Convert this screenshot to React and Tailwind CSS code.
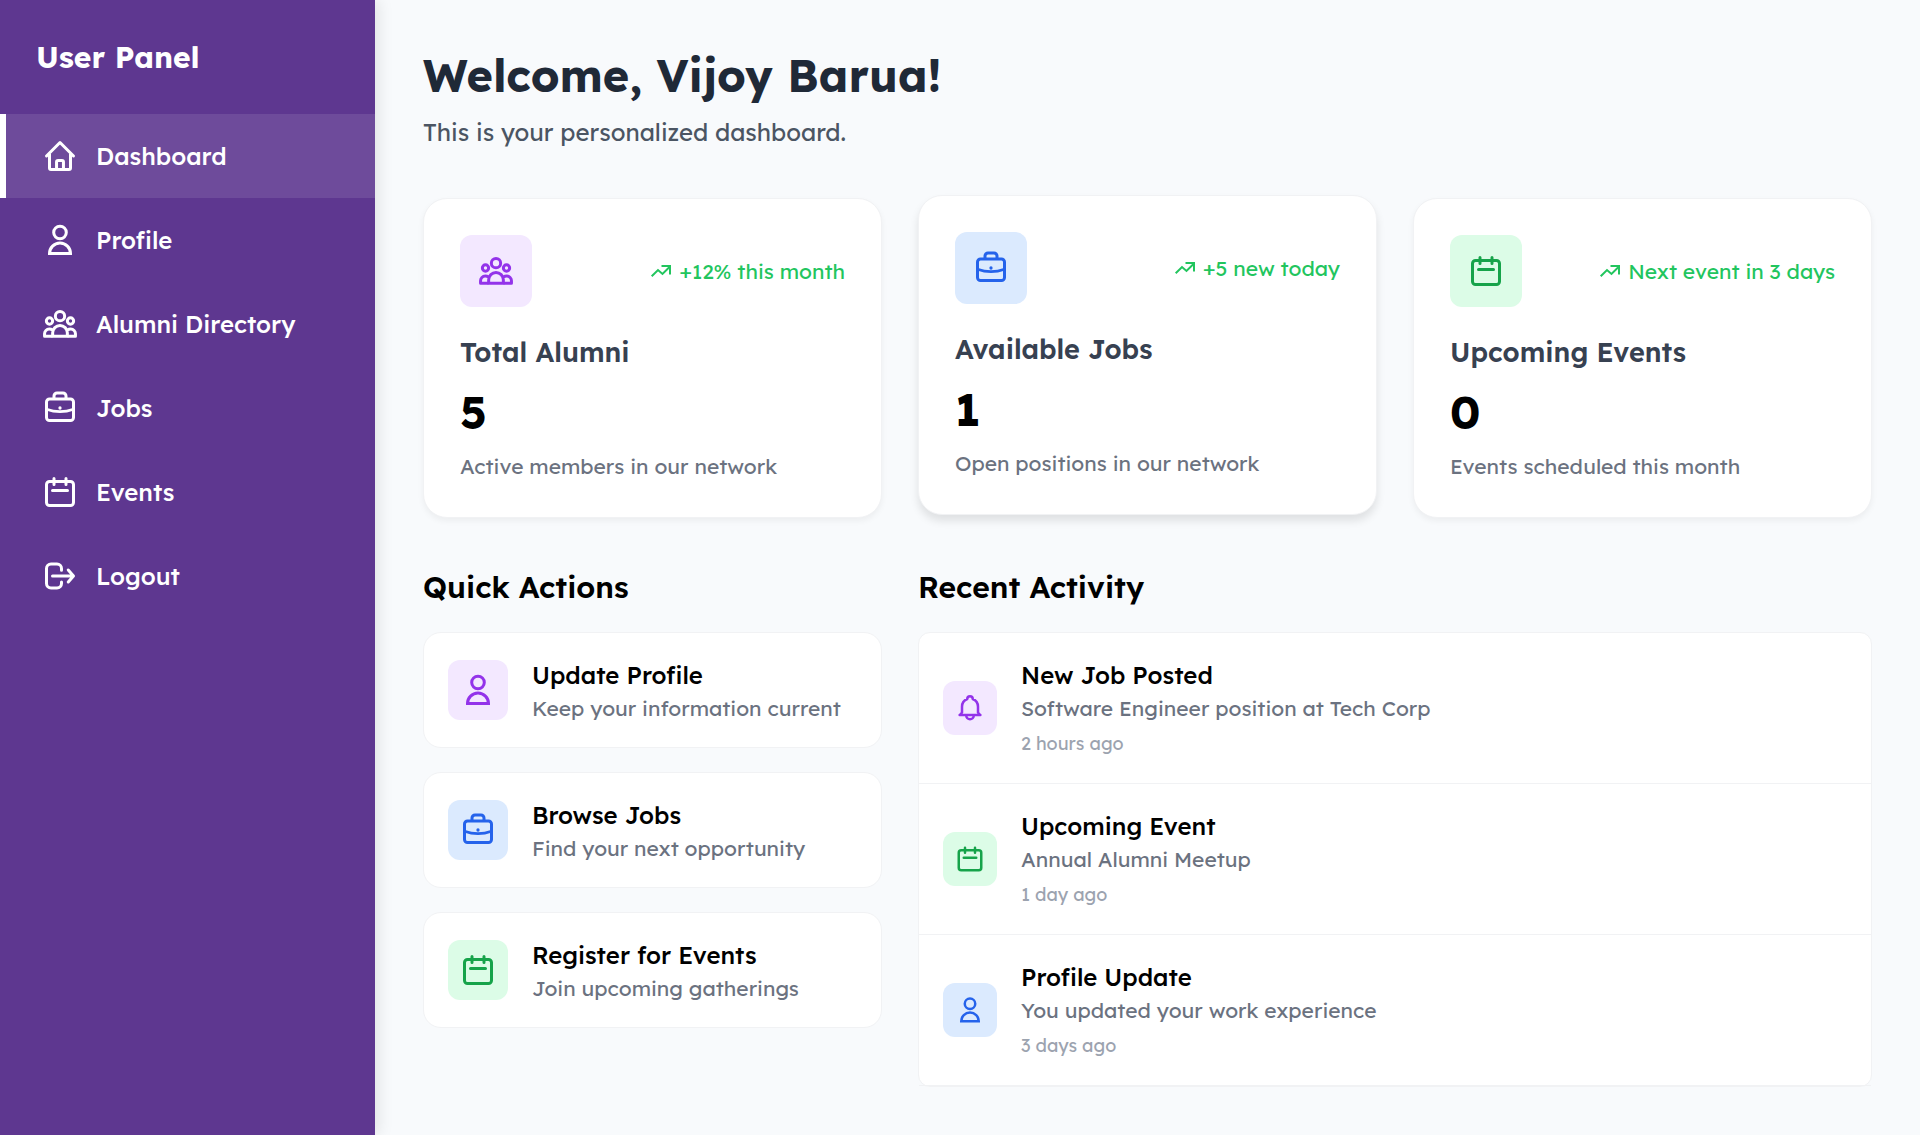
const Icon = ({ className = "size-9", children }) => (
  <svg
    viewBox="0 0 24 24"
    fill="none"
    stroke="currentColor"
    strokeWidth="2"
    aria-hidden="true"
    className={`shrink-0 ${className}`}
  >
    {children}
  </svg>
);

const HomeIcon = (props) => (
  <Icon {...props}>
    <path d="M3 12l9-9 9 9" strokeLinecap="round" strokeLinejoin="round" />
    <path d="M5 10.5V20a1 1 0 0 0 1 1h12a1 1 0 0 0 1-1v-9.5" />
    <path d="M9.7 21v-5a1 1 0 0 1 1-1h2.6a1 1 0 0 1 1 1v5" />
  </Icon>
);

const UserIcon = (props) => (
  <Icon {...props}>
    <circle cx="12" cy="7" r="4.2" />
    <path d="M5 21a7 7 0 0 1 14 0z" />
  </Icon>
);

const UsersIcon = (props) => (
  <Icon {...props}>
    <circle cx="12" cy="6.8" r="3.1" />
    <circle cx="5" cy="10" r="2.1" />
    <circle cx="19" cy="10" r="2.1" />
    <path d="M7.1 20.2v-2.3a4.9 4.9 0 0 1 9.8 0v2.3z" strokeLinejoin="round" />
    <path d="M7 20.2H1.7v-1.7a3.1 3.1 0 0 1 3.1-3.1c.9 0 1.6.2 2.2.6" strokeLinejoin="round" />
    <path d="M17 20.2h5.3v-1.7a3.1 3.1 0 0 0-3.1-3.1c-.9 0-1.600.2-2.2.6" strokeLinejoin="round" />
  </Icon>
);

const BriefcaseIcon = (props) => (
  <Icon {...props}>
    <rect x="3" y="6" width="18" height="14.3" rx="2" />
    <path d="M8 6V4a2 2 0 0 1 2-2h4a2 2 0 0 1 2 2v2" />
    <path d="M3 12.8c5.5 2 12.500 2 18 0" strokeWidth="1.8" />
    <circle cx="12" cy="12" r="1.1" fill="currentColor" stroke="none" />
  </Icon>
);

const CalendarIcon = (props) => (
  <Icon {...props}>
    <rect x="3" y="5" width="18" height="16" rx="2" />
    <path d="M8 3v4M16 3v4M7 11h10" strokeLinecap="round" />
  </Icon>
);

const LogoutIcon = (props) => (
  <Icon {...props}>
    <path
      d="M13 8.200V7A3 3 0 0 0 10 4H6A3 3 0 0 0 3 7v10a3 3 0 0 0 3 3h4a3 3 0 0 0 3-3v-1"
      strokeLinecap="round"
    />
    <path d="M7 12h14M17.500 8l3.500 4-3.500 4" strokeLinecap="round" strokeLinejoin="round" />
  </Icon>
);

const BellIcon = (props) => (
  <Icon {...props}>
    <path
      d="M3.700 17.500h16.600M4.300 17l1.300-1.400V11c0-2.800 1.700-5.200 4.200-6.200 0-1.300.9-2.200 2.200-2.200s2.200.9 2.200 2.200c2.500 1 4.200 3.400 4.200 6.200v4.600l1.300 1.400"
      strokeLinecap="round"
      strokeLinejoin="round"
    />
    <path d="M9 18a3 3 0 0 0 6 0" />
  </Icon>
);

const TrendIcon = (props) => (
  <Icon {...props}>
    <path d="M2.700 17.300L9 11l4.500 4 7.500-7.500" />
    <path d="M12.500 7H21v8.500" />
  </Icon>
);

const tones = {
  purple: "bg-[#f3e8ff] text-[#9333ea]",
  blue: "bg-[#dbeafe] text-[#2563eb]",
  green: "bg-[#dcfce7] text-[#16a34a]",
};

const navItems = [
  { label: "Dashboard", icon: HomeIcon, active: true },
  { label: "Profile", icon: UserIcon },
  { label: "Alumni Directory", icon: UsersIcon },
  { label: "Jobs", icon: BriefcaseIcon },
  { label: "Events", icon: CalendarIcon },
  { label: "Logout", icon: LogoutIcon },
];

const stats = [
  { title: "Total Alumni", value: "5", note: "Active members in our network", trend: "+12% this month", icon: UsersIcon, tone: "purple" },
  { title: "Available Jobs", value: "1", note: "Open positions in our network", trend: "+5 new today", icon: BriefcaseIcon, tone: "blue", raised: true },
  { title: "Upcoming Events", value: "0", note: "Events scheduled this month", trend: "Next event in 3 days", icon: CalendarIcon, tone: "green" },
];

const actions = [
  { title: "Update Profile", note: "Keep your information current", icon: UserIcon, tone: "purple" },
  { title: "Browse Jobs", note: "Find your next opportunity", icon: BriefcaseIcon, tone: "blue" },
  { title: "Register for Events", note: "Join upcoming gatherings", icon: CalendarIcon, tone: "green" },
];

const activity = [
  { title: "New Job Posted", note: "Software Engineer position at Tech Corp", time: "2 hours ago", icon: BellIcon, tone: "purple" },
  { title: "Upcoming Event", note: "Annual Alumni Meetup", time: "1 day ago", icon: CalendarIcon, tone: "green" },
  { title: "Profile Update", note: "You updated your work experience", time: "3 days ago", icon: UserIcon, tone: "blue" },
];

function Sidebar() {
  return (
    <aside className="w-[375px] shrink-0 bg-[#5e3790] text-white shadow-[3px_0_15px_rgba(0,0,0,0.1)]">
      <h2 className="p-9 text-[30px] leading-[42px] font-bold">User Panel</h2>
      <nav>
        {navItems.map(({ label, icon: Glyph, active }) => (
          <a
            key={label}
            href="#"
            aria-current={active ? "page" : undefined}
            className={`flex h-21 items-center gap-4.5 border-l-6 px-9 text-2xl font-medium ${
              active ? "border-white bg-white/10" : "border-transparent"
            }`}
          >
            <Glyph />
            {label}
          </a>
        ))}
      </nav>
    </aside>
  );
}

function StatCard({ title, value, note, trend, icon: Glyph, tone, raised }) {
  return (
    <article
      className={`rounded-3xl border border-[#f1f2f4] bg-white p-9 ${
        raised
          ? "-translate-y-[3px] shadow-[0_6px_9px_rgba(0,0,0,0.1)]"
          : "shadow-[0_3px_6px_rgba(0,0,0,0.05)]"
      }`}
    >
      <div className="flex items-center justify-between">
        <div className={`rounded-xl p-4.5 ${tones[tone]}`}>
          <Glyph />
        </div>
        <p className="flex items-center gap-1.5 text-[21px] leading-[30px] text-[#22c55e]">
          <TrendIcon className="size-6" />
          {trend}
        </p>
      </div>
      <h3 className="mt-6 text-[27px] leading-[42px] font-semibold text-[#374151]">{title}</h3>
      <p className="mt-3 text-[45px] leading-[54px] font-bold text-black">{value}</p>
      <p className="mt-3 text-[21px] leading-[30px] text-[#6b7280]">{note}</p>
    </article>
  );
}

function ActionCard({ title, note, icon: Glyph, tone }) {
  return (
    <a href="#" className="flex items-center gap-6 rounded-[18px] border border-[#f1f2f4] bg-white p-6">
      <span className={`rounded-xl p-3 ${tones[tone]}`}>
        <Glyph />
      </span>
      <span>
        <span className="block text-2xl leading-9 font-medium text-black">{title}</span>
        <span className="block text-[21px] leading-[30px] text-[#6b7280]">{note}</span>
      </span>
    </a>
  );
}

function ActivityRow({ title, note, time, icon: Glyph, tone }) {
  return (
    <li className="flex items-center gap-6 border-b border-[#f1f2f4] p-6">
      <div className={`rounded-xl p-3 ${tones[tone]}`}>
        <Glyph className="size-7.5" />
      </div>
      <div>
        <h3 className="text-2xl leading-9 font-medium text-black">{title}</h3>
        <p className="text-[21px] leading-[30px] text-[#6b7280]">{note}</p>
        <p className="mt-1.5 text-lg leading-[30px] text-[#9ca3af]">{time}</p>
      </div>
    </li>
  );
}

export default function App() {
  return (
    <div className="flex min-h-screen bg-[#f8fafc] font-['Lexend','Inter',sans-serif]">
      <Sidebar />
      <main className="min-w-0 flex-1 p-12">
        <header>
          <h1 className="text-[45px] leading-[54px] font-bold text-[#1f2937]">Welcome, Vijoy Barua!</h1>
          <p className="mt-3 text-2xl leading-9 text-[#4b5563]">This is your personalized dashboard.</p>
        </header>
        <section className="mt-12 grid grid-cols-3 gap-9">
          {stats.map((item) => (
            <StatCard key={item.title} {...item} />
          ))}
        </section>
        <div className="mt-12 grid grid-cols-3 gap-9">
          <section>
            <h2 className="text-[30px] leading-[42px] font-semibold text-black">Quick Actions</h2>
            <div className="mt-6 flex flex-col gap-6">
              {actions.map((item) => (
                <ActionCard key={item.title} {...item} />
              ))}
            </div>
          </section>
          <section className="col-span-2">
            <h2 className="text-[30px] leading-[42px] font-semibold text-black">Recent Activity</h2>
            <ul className="mt-6 rounded-xl border border-[#f1f2f4] bg-white">
              {activity.map((item) => (
                <ActivityRow key={item.title} {...item} />
              ))}
            </ul>
          </section>
        </div>
      </main>
    </div>
  );
}
